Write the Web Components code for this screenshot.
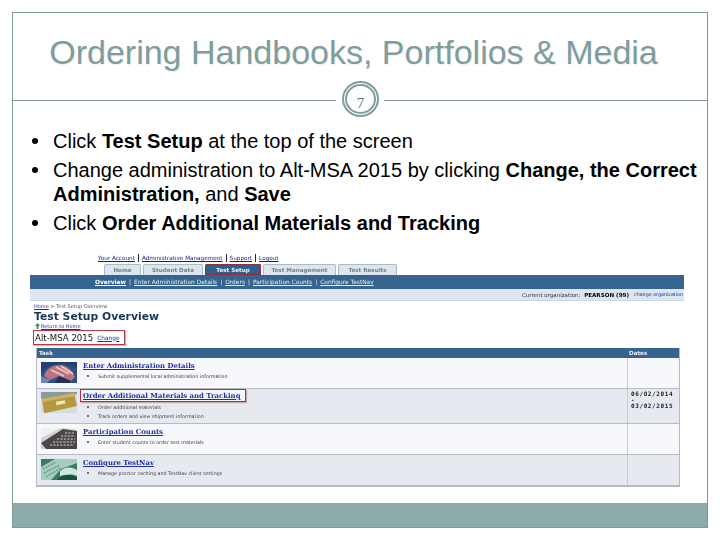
<!DOCTYPE html>
<html>
<head>
<meta charset="utf-8">
<style>
  html, body { margin: 0; background: #fff; }
  body { padding: 12px 0 0 12px; font-family: "Liberation Sans", Arial, sans-serif; }
  task-row li::marker { font-size: 7px; }
</style>
</head>
<body>
<slide-frame>
  <slide-heading slot="head" number="7">Ordering Handbooks, Portfolios &amp; Media</slide-heading>
  <bullet-item>Click <b>Test Setup</b> at the top of the screen</bullet-item>
  <bullet-item>Change administration to Alt-MSA 2015 by clicking <b>Change, the Correct</b> <b>Administration,</b> and <b>Save</b></bullet-item>
  <bullet-item>Click <b>Order Additional Materials and Tracking</b></bullet-item>
  <setup-shot slot="shot">
    <task-row kind="hands" title="Enter Administration Details">
      <li>Submit supplemental local administration information</li>
    </task-row>
    <task-row kind="envelope" title="Order Additional Materials and Tracking" marked alt dates>
      <li>Order additional materials</li>
      <li>Track orders and view shipment information</li>
    </task-row>
    <task-row kind="calc" title="Participation Counts" short>
      <li>Enter student counts to order test materials</li>
    </task-row>
    <task-row kind="keys" title="Configure TestNav" short alt>
      <li>Manage proctor caching and TestNav client settings</li>
    </task-row>
  </setup-shot>
</slide-frame>

<script>
class SlideFrame extends HTMLElement {
    constructor() {
        super();
        this.attachShadow({ mode: 'open' });
        this.shadowRoot.innerHTML = `
            <style>
                :host {
                    display: flex;
                    flex-direction: column;
                    box-sizing: border-box;
                    width: 696px;
                    height: 516px;
                    border: 1px solid #80989a;
                    border-right-color: #8a8f90;
                    background: #fff;
                }
                .bullets { padding: 17px 0 0 0; }
                .shot { flex: 1; padding: 14px 0 0 17px; }
                .band { height: 23px; background: #8dabaa; border-top: 1px solid #8fa9a8; }
            </style>
            <slot name="head"></slot>
            <div class="bullets"><slot></slot></div>
            <div class="shot"><slot name="shot"></slot></div>
            <div class="band"></div>
        `;
    }
}

class SlideHeading extends HTMLElement {
    constructor() {
        super();
        this.attachShadow({ mode: 'open' });
        this.shadowRoot.innerHTML = `
            <style>
                :host { display: block; }
                .title {
                    height: 67px;
                    box-sizing: border-box;
                    padding: 19px 13px 0 0;
                    text-align: center;
                    font-size: 34px;
                    line-height: 40px;
                    color: #7f9d9c;
                    text-shadow: 1px 1px 0 #eef2f2;
                    white-space: nowrap;
                }
                .rule { display: flex; height: 32px; }
                .line { height: 1px; margin-top: 20px; background: #80989a; }
                .line.left { width: 323px; }
                .line.right { flex: 1; }
                .ring {
                    box-sizing: border-box;
                    width: 37px;
                    height: 36px;
                    margin: 1px 5px 0 6px;
                    border: 5px double #7f9d9c;
                    border-radius: 50%;
                    display: flex;
                    align-items: flex-end;
                    justify-content: center;
                    font: 15px/1 "Liberation Serif", serif;
                    color: #5f6f6e;
                    padding-bottom: 1px;
                }
            </style>
            <div class="title"><slot></slot></div>
            <div class="rule">
                <div class="line left"></div>
                <div class="ring">${this.getAttribute('number')}</div>
                <div class="line right"></div>
            </div>
        `;
    }
}

class BulletItem extends HTMLElement {
    constructor() {
        super();
        this.attachShadow({ mode: 'open' });
        this.shadowRoot.innerHTML = `
            <style>
                :host {
                    display: flex;
                    font-size: 20px;
                    line-height: 24px;
                    color: #000;
                    margin-bottom: 5px;
                }
                .dot { width: 40px; flex: none; display: flex; justify-content: flex-end; padding-top: 9px; box-sizing: border-box; }
                .dot i { width: 6px; height: 6px; border-radius: 50%; background: #000; margin-right: 15px; }
            </style>
            <div class="dot"><i></i></div>
            <div class="text"><slot></slot></div>
        `;
    }
}

class SetupShot extends HTMLElement {
    constructor() {
        super();
        this.attachShadow({ mode: 'open' });
        this.shadowRoot.innerHTML = `
            <style>
                :host {
                    display: block;
                    width: 654px;
                    font-family: "DejaVu Sans", Verdana, sans-serif;
                    filter: blur(0.4px);
                }
                a { color: #1f2f9f; text-decoration: underline; }
                .top {
                    display: flex;
                    margin-left: 68px;
                    font-size: 5.7px;
                    line-height: 8px;
                    height: 8px;
                    gap: 3px;
                }
                .top a { color: #1a1a8f; white-space: nowrap; }
                .top span { border-left: 1px solid #223; height: 8px; }
                .tabs { display: flex; margin-left: 74px; gap: 2px; height: 11px; margin-top: 2px; }
                .tab {
                    box-sizing: border-box;
                    background: #dde6ee;
                    border: 1px solid #a8bdcc;
                    border-bottom: 0;
                    border-radius: 2px 2px 0 0;
                    font-size: 5.6px;
                    font-weight: bold;
                    line-height: 11px;
                    color: #777f88;
                    text-align: center;
                }
                .tab.on { background: #2f5f8e; color: #eef3f8; outline: 1px solid #8a3040; outline-offset: -1px; border-color: #8a3040; }
                .nav {
                    display: flex;
                    align-items: center;
                    background: #36648f;
                    height: 14px;
                    padding-left: 65px;
                    gap: 3px;
                    font-size: 5.9px;
                    color: #dfe8f2;
                    white-space: nowrap;
                }
                .nav a { color: #e4ecf5; }
                .nav b { color: #fff; text-decoration: underline; }
                .org {
                    display: flex;
                    justify-content: flex-end;
                    align-items: center;
                    height: 11px;
                    background: #dce6f1;
                    border-bottom: 1px solid #cdd8e4;
                    font-size: 5.5px;
                    color: #334;
                    white-space: nowrap;
                    overflow: hidden;
                }
                .org b { color: #000; font-size: 5.6px; margin: 0 5px 0 2px; }
                .org a { font-size: 4.8px; width: 50px; overflow: hidden; flex: none; }
                .page { padding: 2px 0 0 4px; }
                .crumb { font-size: 5px; line-height: 7px; color: #555; }
                h1 { margin: 1px 0 0; font-size: 10.8px; line-height: 12px; color: #17365c; }
                .back { font-size: 5px; line-height: 6px; display: flex; align-items: center; gap: 1px; margin-left: 1px; }
                .back svg { width: 5px; height: 6px; flex: none; }
                .org-box {
                    display: flex;
                    align-items: center;
                    gap: 4px;
                    box-sizing: border-box;
                    height: 15px;
                    margin: 1px 0 0 -1px;
                    width: 92px;
                    padding-left: 1px;
                    border: 1px solid #b23a48;
                    box-shadow: 1px 1px 1px #bbb;
                    font-size: 8.6px;
                    color: #111;
                    white-space: nowrap;
                }
                .org-box a { font-size: 5.8px; }
                .table { margin: 3px 4px 0 6px; border: solid #b4bcc2; border-width: 0 1px 1px 1px; }
                .head { display: grid; grid-template-columns: 1fr 52px; background: #36648f; color: #e8f0f8; font-size: 5.6px; font-weight: bold; line-height: 10px; }
                .head div { padding-left: 2px; }
            </style>
            <div class="top">
                <a>Your Account</a><span></span><a>Administrative Management</a><span></span><a>Support</a><span></span><a>Logout</a>
            </div>
            <div class="tabs">
                <div class="tab" style="width:37px">Home</div>
                <div class="tab" style="width:60px">Student Data</div>
                <div class="tab on" style="width:56px">Test Setup</div>
                <div class="tab" style="width:73px">Test Management</div>
                <div class="tab" style="width:59px">Test Results</div>
            </div>
            <div class="nav">
                <b>Overview</b><span>|</span><a>Enter Administration Details</a><span>|</span><a>Orders</a><span>|</span><a>Participation Counts</a><span>|</span><a>Configure TestNav</a>
            </div>
            <div class="org">Current organization:&nbsp;<b>PEARSON (99)</b><a>change organization</a></div>
            <div class="page">
                <div class="crumb"><a>Home</a> &gt; Test Setup Overview</div>
                <h1>Test Setup Overview</h1>
                <div class="back"><svg viewBox="0 0 5 6"><path d="M2.5 0 L5 3 L3.4 3 L3.4 6 L1.6 6 L1.6 3 L0 3Z" fill="#2d9a3c"/></svg><a>Return to Home</a></div>
                <div class="org-box">Alt-MSA 2015 <a>Change</a></div>
            </div>
            <div class="table">
                <div class="head"><div>Task</div><div>Dates</div></div>
                <slot></slot>
            </div>
        `;
    }
}

const THUMBS = {
    hands: `<rect width="36" height="21" fill="#2f4f88"/>
        <path d="M0 0 L36 0 L36 6 L22 2 L8 4 L0 10Z" fill="#24406f"/>
        <path d="M3 14 C5 7 11 3 18 3 C25 3 31 7 34 15 L30 19 L18 14 L9 18Z" fill="#b9737a"/>
        <path d="M10 8 L23 14 M15 5 L28 12 M20 4 L32 12" stroke="#e8c6c4" stroke-width="1.8"/>
        <path d="M0 14 L9 18 L6 21 L0 21Z" fill="#6f86b8"/>
        <path d="M18 14 L30 19 L28 21 L14 21Z" fill="#1f2f5c"/>`,
    envelope: `<rect width="36" height="21" fill="#d6dde2"/>
        <path d="M0 0 L36 0 L36 2 L0 7Z" fill="#8b989c"/>
        <path d="M1 7 L33 1 L36 14 L5 21 L3 21Z" fill="#b39a3e"/>
        <path d="M1 7 L33 1 L34 4 L2 10Z" fill="#cdb361"/>
        <rect x="15" y="9" width="9" height="3.5" fill="#ece3bc" transform="rotate(-10 19 10)"/>`,
    calc: `<rect width="36" height="21" fill="#d2d2d2"/>
        <path d="M0 0 L36 0 L36 2 L20 0 L0 10Z" fill="#f0f0f0"/>
        <path d="M0 15 L22 1 L36 3 L36 21 L5 21Z" fill="#4a4649"/>
        <path d="M9 17 L33 17 M12 14 L34 14 M16 11 L34 11 M20 8 L34 8 M24 5 L34 5" stroke="#a99ea2" stroke-width="1.5" stroke-dasharray="2.2 1.2"/>`,
    keys: `<rect width="36" height="21" fill="#3b7a68"/>
        <path d="M0 8 L14 0 L36 0 L36 4 L20 10 L10 21 L0 21Z" fill="#a6cdbc"/>
        <path d="M2 10 L15 3 M3 14 L19 6 M5 18 L20 9" stroke="#5f9c87" stroke-width="1.4" stroke-dasharray="2 1"/>
        <path d="M19 12 C25 7 31 8 36 11 L36 17 C30 15 25 15 19 18Z" fill="#cfe6da"/>
        <path d="M16 21 L20 17 C26 15 31 16 36 18 L36 21Z" fill="#174f42"/>`
};

class TaskRow extends HTMLElement {
    constructor() {
        super();
        this.attachShadow({ mode: 'open' });
        const alt = this.hasAttribute('alt');
        const marked = this.hasAttribute('marked');
        this.shadowRoot.innerHTML = `
            <style>
                :host {
                    display: grid;
                    grid-template-columns: 1fr 52px;
                    height: ${marked ? 35 : 31}px;
                    box-sizing: border-box;
                    border-bottom: 1px solid #b4bcc2;
                    background: ${alt ? '#e6eaf0' : '#f6f8fc'};
                }
                .task { display: flex; padding: 3px 0 0 4px; gap: 6px; }
                svg { flex: none; width: 36px; height: 21px; margin-top: ${marked ? 0 : 1}px; }
                .info { padding-top: 1px; }
                .name {
                    width: fit-content;
                    font: bold 6.9px/9px "DejaVu Serif", serif;
                    color: #1f2f9f;
                    text-decoration: underline;
                    white-space: nowrap;
                }
                .name.marked {
                    padding: 2px 5px 0 2px;
                    margin: -4px 0 0 -3px;
                    border: 1px solid #c02a3a;
                    box-shadow: 1px 1px 1px #c9a8a8;
                    background: #f3f5f9;
                }
                ul { margin: 1px 0 0; padding: 0 0 0 15px; font-size: 4.8px; line-height: 8px; color: #444; }
                .dates {
                    border-left: 1px solid #c4ccd2;
                    padding: 2px 0 0 3px;
                    font: bold 6px/6px "DejaVu Sans Mono", monospace;
                    letter-spacing: 0.6px;
                    color: #222;
                }
            </style>
            <div class="task">
                <svg viewBox="0 0 36 21">${THUMBS[this.getAttribute('kind')]}</svg>
                <div class="info">
                    <div class="name ${marked ? 'marked' : ''}">${this.getAttribute('title')}</div>
                    <ul><slot></slot></ul>
                </div>
            </div>
            <div class="dates">${this.hasAttribute('dates') ? '06/02/2014<br>-<br>03/02/2015' : ''}</div>
        `;
    }
}

customElements.define('slide-frame', SlideFrame);
customElements.define('slide-heading', SlideHeading);
customElements.define('bullet-item', BulletItem);
customElements.define('setup-shot', SetupShot);
customElements.define('task-row', TaskRow);
</script>
</body>
</html>
